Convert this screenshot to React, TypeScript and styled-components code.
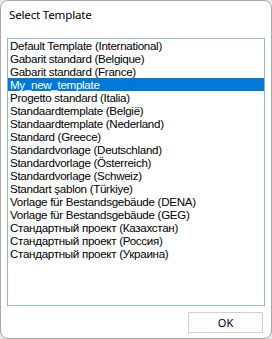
import React, { useState } from 'react'
import styled, { createGlobalStyle } from 'styled-components'

const GlobalStyle = createGlobalStyle`
  html, body {
    margin: 0;
    padding: 0;
    background: #e8e8e8;
  }
  body {
    font-family: "Liberation Sans", Arial, sans-serif;
  }
`

const Window = styled.div`
  box-sizing: border-box;
  width: 272px;
  height: 339px;
  background: #ffffff;
  border: 1px solid #a9a9a9;
  border-radius: 8px;
  display: flex;
  flex-direction: column;
  overflow: hidden;
`

const TitleBar = styled.div`
  height: 27px;
  padding-left: 8px;
  display: flex;
  align-items: center;
  font-family: "Noto Sans", sans-serif;
  font-size: 11.6px;
  letter-spacing: -0.2px;
  color: #000;
`

const Body = styled.div`
  display: flex;
  flex-direction: column;
  padding: 10px 6px 0 6px;
  gap: 6px;
`

const ListBox = styled.ul`
  box-sizing: border-box;
  margin: 0;
  padding: 0;
  list-style: none;
  height: 268px;
  border: 1px solid #8fbccd;
  background: #ffffff;
  overflow: hidden;
`

const Item = styled.li<{ selected: boolean }>`
  height: 13px;
  line-height: 13px;
  padding-left: 2px;
  font-size: 11.6px;
  letter-spacing: -0.3px;
  white-space: nowrap;
  color: ${({ selected }) => (selected ? '#ffffff' : '#000000')};
  background: ${({ selected }) => (selected ? '#0078d7' : 'transparent')};
  cursor: default;
`

const Footer = styled.div`
  display: flex;
  justify-content: flex-end;
  padding-right: 2px;
`

const Button = styled.button`
  box-sizing: border-box;
  width: 75px;
  height: 21px;
  background: #fdfdfd;
  border: 1px solid #d0d0d0;
  font-family: "Noto Sans", sans-serif;
  font-size: 11px;
  line-height: 1;
  color: #000;
  padding: 0;
`

const templates = [
  'Default Template (International)',
  'Gabarit standard (Belgique)',
  'Gabarit standard (France)',
  'My_new_template',
  'Progetto standard (Italia)',
  'Standaardtemplate (België)',
  'Standaardtemplate (Nederland)',
  'Standard (Greece)',
  'Standardvorlage (Deutschland)',
  'Standardvorlage (Österreich)',
  'Standardvorlage (Schweiz)',
  'Standart şablon (Türkiye)',
  'Vorlage für Bestandsgebäude (DENA)',
  'Vorlage für Bestandsgebäude (GEG)',
  'Стандартный проект (Казахстан)',
  'Стандартный проект (Россия)',
  'Стандартный проект (Украина)',
]

export default function App() {
  const [selected, setSelected] = useState(3)

  return (
    <>
      <GlobalStyle />
      <Window>
        <TitleBar>Select Template</TitleBar>
        <Body>
          <ListBox>
            {templates.map((name, i) => (
              <Item key={name} selected={i === selected} onClick={() => setSelected(i)}>
                {name}
              </Item>
            ))}
          </ListBox>
          <Footer>
            <Button>OK</Button>
          </Footer>
        </Body>
      </Window>
    </>
  )
}
